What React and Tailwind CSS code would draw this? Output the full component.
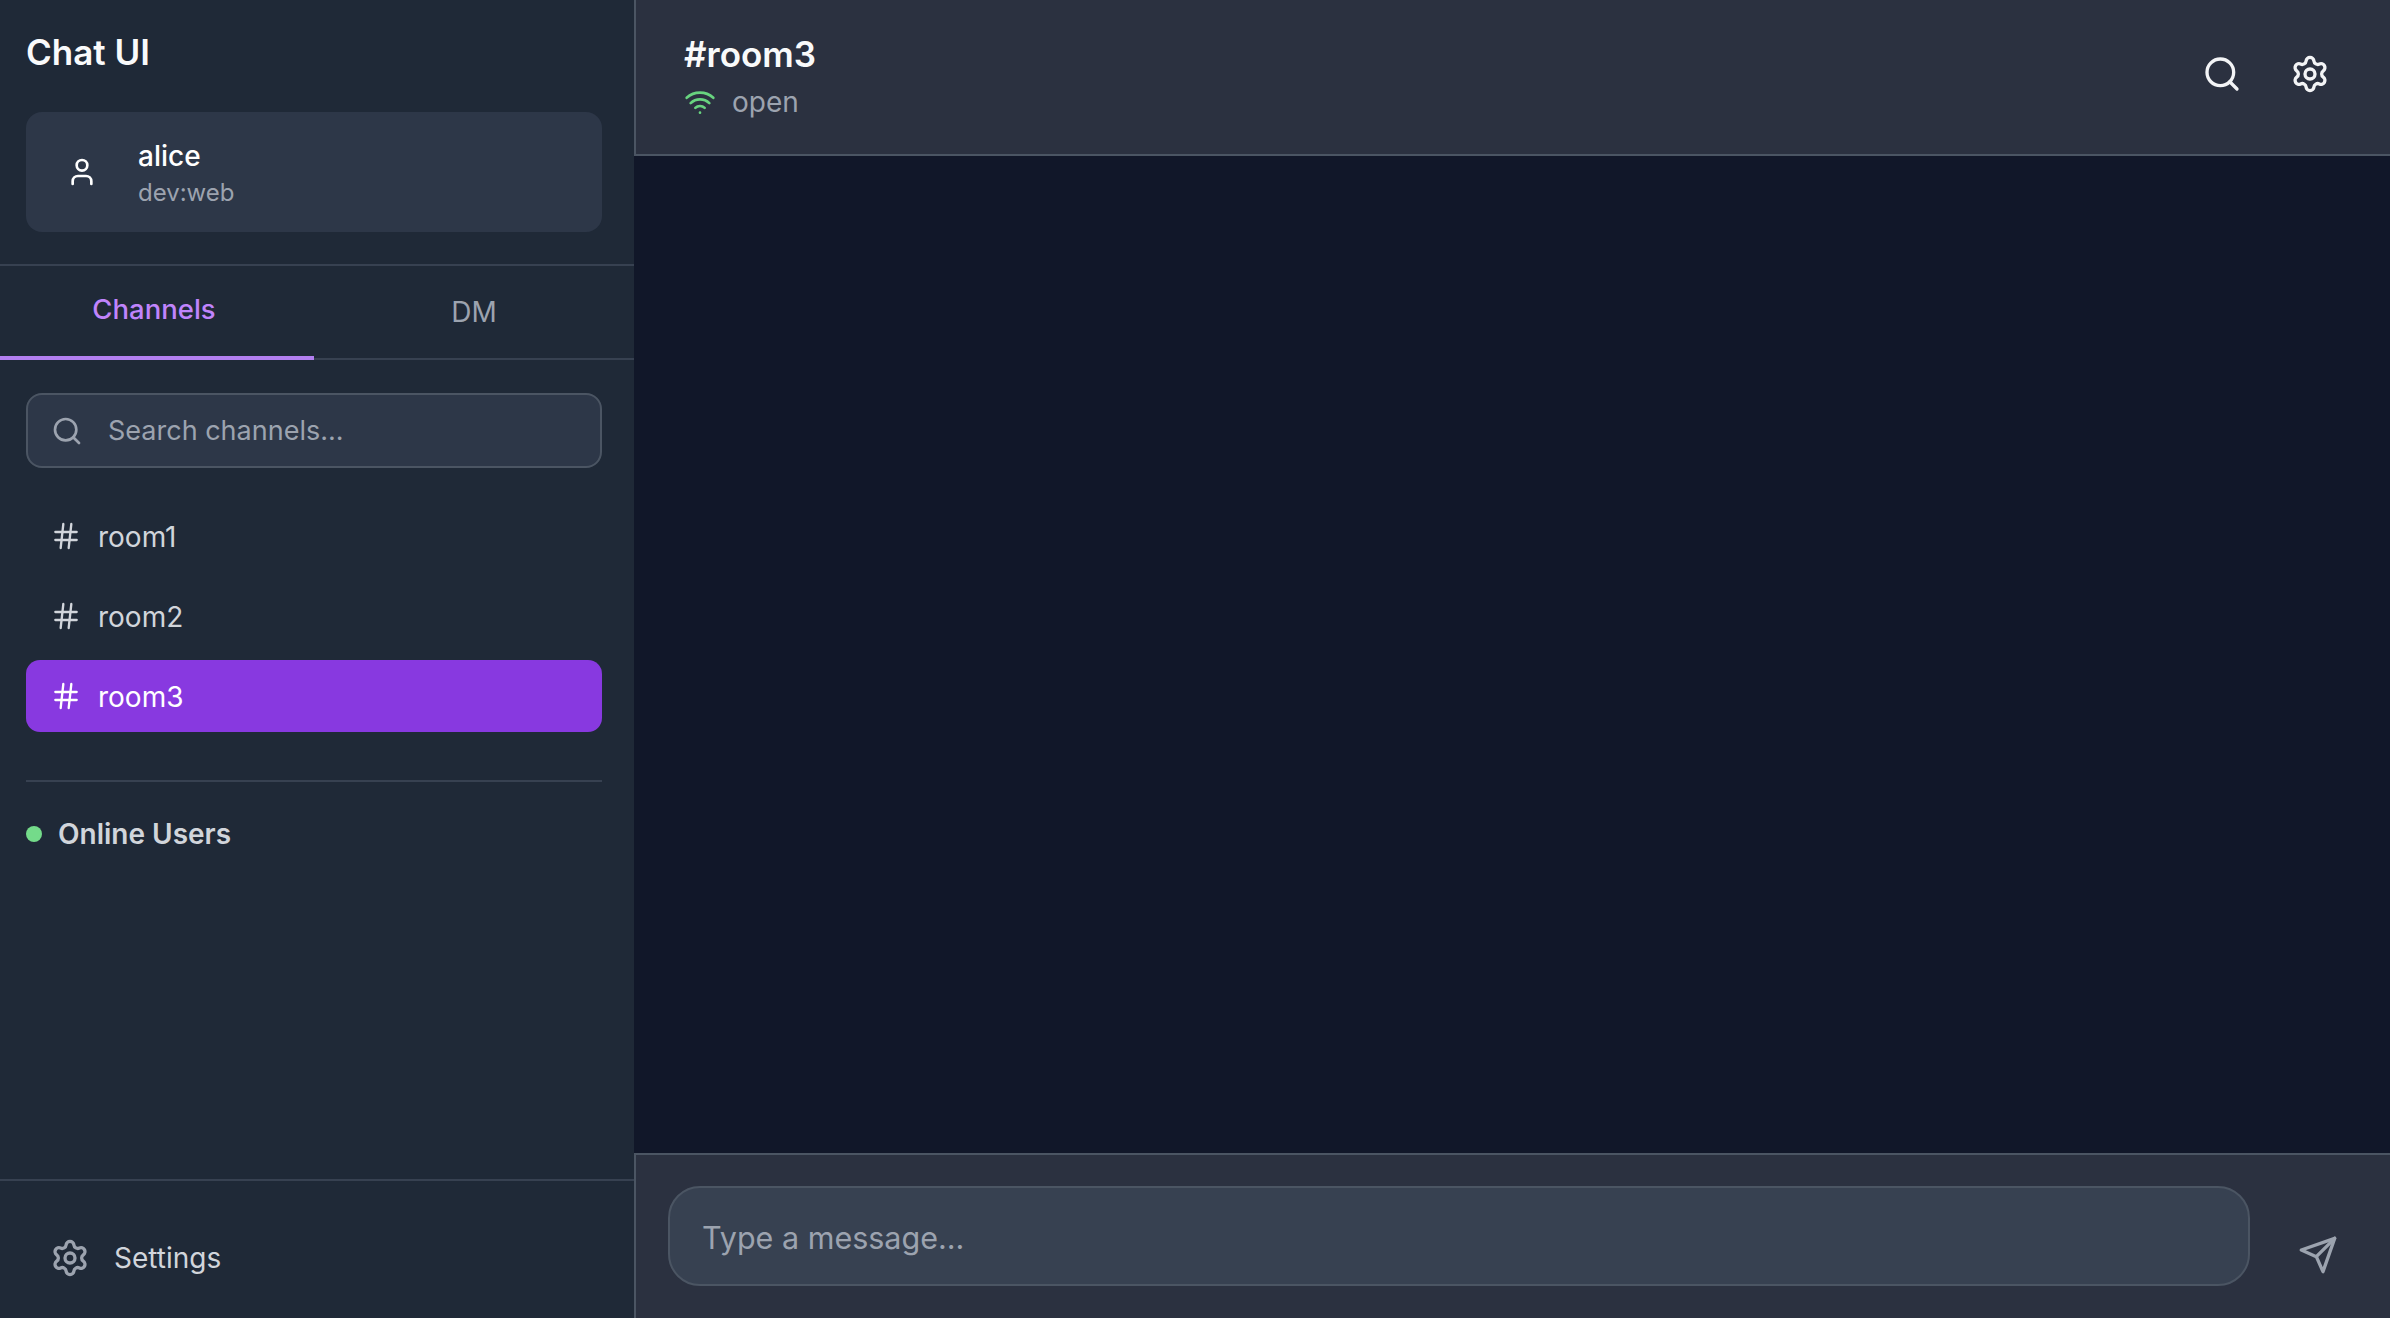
import React from 'react';
import { Search, Settings, User, Hash, Wifi } from 'lucide-react';

const rooms = ['room1', 'room2', 'room3'];

// older lucide send shape, the current package rounds the tips too much
const SendIcon = () => (
  <svg width="40" height="40" viewBox="0 0 24 24" fill="none" stroke="currentColor" strokeWidth="2" strokeLinecap="round" strokeLinejoin="round">
    <path d="m22 2-7 20-4-9-9-4Z" />
    <path d="M22 2 11 13" />
  </svg>
);

const ChannelRow = ({ name, active }) => (
  <div className={`flex items-center h-[72px] px-6 gap-[16px] rounded-[14px] text-[28px] ${active ? 'bg-[#8839e0] text-white' : 'text-[#d1d5db]'}`}>
    <Hash size={32} strokeWidth={1.75} />
    <span className="pt-[1px]">{name}</span>
  </div>
);

const Sidebar = () => (
  <aside className="w-[634px] shrink-0 h-full flex flex-col bg-[#1f2937]">
    <div className="h-[266px] shrink-0 pl-[26px] pr-[32px] border-b-2 border-[#374151]">
      <h1 className="h-[112px] pt-[30px] text-[35px] leading-[44px] font-semibold text-[#f9fafb]">Chat UI</h1>
      <div className="h-[120px] flex items-center rounded-[16px] bg-[#2d3748]">
        <div className="w-[112px] flex justify-center text-white">
          <User size={32} strokeWidth={2} />
        </div>
        <div className="pt-[6px]">
          <div className="text-[28px] leading-[34px] font-medium text-white">alice</div>
          <div className="text-[24px] leading-[36px] pt-[2px] text-[#9ca3af]">dev:web</div>
        </div>
      </div>
    </div>
    <div className="h-[94px] shrink-0 flex border-b-2 border-[#374151] text-[28px]">
      <div className="w-[314px] -mb-[2px] h-[94px] pb-[2px] pr-[6px] flex items-center justify-center font-medium text-[27.5px] text-[#c084fc] border-b-4 border-[#b27ff0]">Channels</div>
      <div className="flex-1 flex items-center justify-center text-[#9ca3af]">DM</div>
    </div>
    <div className="flex-1 min-h-0 pl-[26px] pr-[32px] pt-[33px]">
      <div className="h-[75px] flex items-center rounded-[16px] border-2 border-[#4b5563] bg-[#2d3748] text-[#9ca3af]">
        <Search size={32} strokeWidth={2} className="ml-[23px]" />
        <span className="ml-[25px] pt-[2px] text-[27px]">Search channels...</span>
      </div>
      <div className="mt-[32px] flex flex-col gap-[8px]">
        {rooms.map(r => <ChannelRow key={r} name={r} active={r === 'room3'} />)}
      </div>
      <div className="mt-[48px] pt-[34px] border-t-2 border-[#374151] flex items-center gap-[16px]">
        <span className="w-[16px] h-[16px] rounded-full bg-[#74db8a]"></span>
        <span className="text-[28px] leading-[36px] font-semibold text-[#d1d5db]">Online Users</span>
      </div>
    </div>
    <div className="h-[139px] shrink-0 border-t-2 border-[#374151] flex items-center pl-[50px] pt-[16px]">
      <Settings size={40} strokeWidth={2} className="text-[#9ca3af]" />
      <span className="ml-[24px] text-[28px] text-[#d1d5db]">Settings</span>
    </div>
  </aside>
);

const Header = () => (
  <header className="h-[156px] shrink-0 flex items-center justify-between pl-[48px] pr-[60px] bg-[#2b3140] border-l-2 border-b-2 border-[#4b5563]">
    <div className="pb-[3px]">
      <div className="text-[35px] leading-[44px] font-semibold text-[#f9fafb]">#room3</div>
      <div className="flex items-center gap-[16px] mt-[8px]">
        <Wifi size={32} strokeWidth={2} className="text-[#68d47f]" />
        <span className="text-[28px] leading-[36px] text-[#9ca3af]">open</span>
      </div>
    </div>
    <div className="flex items-center gap-[48px] pb-[6px] text-[#f3f4f6]">
      <Search size={40} strokeWidth={2} />
      <Settings size={40} strokeWidth={2} />
    </div>
  </header>
);

const Composer = () => (
  <div className="h-[165px] shrink-0 flex items-start pl-[32px] pr-[52px] pt-[31px] bg-[#2b3140] border-l-2 border-t-2 border-[#4b5563]">
    <div className="flex-1 h-[100px] flex items-center px-[32px] pt-[3px] rounded-[32px] border-2 border-[#4b5563] bg-[#374151] text-[30.5px] text-[#9ca3af]">
      Type a message...
    </div>
    <div className="ml-[48px] mt-[49px] text-[#9ca3af]">
      <SendIcon />
    </div>
  </div>
);

export default function App() {
  return (
    <div className="flex h-[1318px] w-[2390px] overflow-hidden bg-[#111827] font-['Inter',sans-serif]">
      <Sidebar />
      <main className="flex-1 min-w-0 flex flex-col">
        <Header />
        <div className="flex-1 bg-[#111729]"></div>
        <Composer />
      </main>
    </div>
  );
}
